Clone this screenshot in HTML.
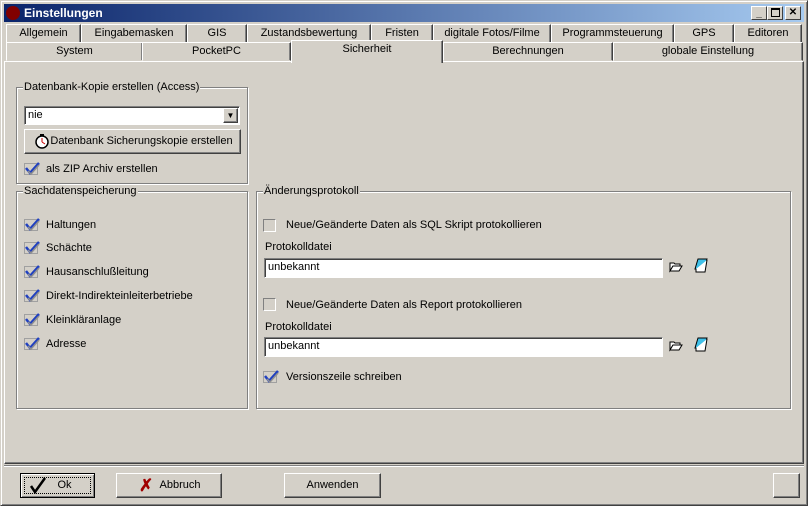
<!DOCTYPE html>
<html><head><meta charset="utf-8"><style>
*{box-sizing:border-box;margin:0;padding:0}
body{width:808px;height:506px;background:#d4d0c8;font-family:"Liberation Sans",sans-serif;font-size:11px;color:#000;position:relative;overflow:hidden}
.a{position:absolute}
.win{left:0;top:0;width:808px;height:506px;border:1px solid;border-color:#d4d0c8 #404040 #404040 #d4d0c8;box-shadow:inset 1px 1px #fff,inset -1px -1px #808080}
.title{left:4px;top:4px;width:800px;height:18px;background:linear-gradient(90deg,#0a246a,#a6caf0);color:#fff;font-weight:bold;font-size:12px;line-height:18px;padding-left:20px}
.tb{top:6px;width:16px;height:14px;background:#d4d0c8;border:1px solid;border-color:#fff #404040 #404040 #fff;font-size:10px;font-weight:bold;text-align:center;line-height:11px}
.tab{height:19px;background:#d4d0c8;border:1px solid;border-color:#fff #404040 transparent #fff;box-shadow:inset -1px 0 #808080;text-align:center;line-height:17px;font-size:11px}
.panel{left:4px;top:61px;width:800px;height:403px;border:1px solid;border-color:#fff #404040 #404040 #fff;box-shadow:inset -1px -1px #808080}
.grp{border:1px solid #808080;box-shadow:1px 1px #fff,inset 1px 1px #fff}
.lg{background:#d4d0c8;padding:0 1px;line-height:12px}
.inp{background:#fff;border:1px solid;border-color:#808080 #fff #fff #808080;box-shadow:inset 1px 1px #404040;padding-left:3px;line-height:17px}
.btn{background:#d4d0c8;border:1px solid;border-color:#fff #404040 #404040 #fff;box-shadow:inset -1px -1px #808080;text-align:center}
.cb{width:13px;height:13px;background:#d4d0c8;border:1px solid;border-color:#808080 #fff #fff #808080}
.t{font-size:11px}
</style></head><body>
<div class="a win"></div>
<div class="a title">Einstellungen</div>
<div class="a" style="left:6px;top:6px;width:14px;height:14px;background:#800000;border-radius:50%"></div>
<div class="a tb" style="left:751px;line-height:13px">_</div>
<div class="a tb" style="left:767px"><div style="margin:1px auto;width:9px;height:9px;border:1px solid #000;border-top-width:2px"></div></div>
<div class="a tb" style="left:785px;line-height:12px">&#x2715;</div>

<div class="a tab" style="left:6px;top:24px;width:75px">Allgemein</div>
<div class="a tab" style="left:81px;top:24px;width:106px">Eingabemasken</div>
<div class="a tab" style="left:187px;top:24px;width:60px">GIS</div>
<div class="a tab" style="left:247px;top:24px;width:124px">Zustandsbewertung</div>
<div class="a tab" style="left:371px;top:24px;width:62px">Fristen</div>
<div class="a tab" style="left:433px;top:24px;width:118px">digitale Fotos/Filme</div>
<div class="a tab" style="left:551px;top:24px;width:123px">Programmsteuerung</div>
<div class="a tab" style="left:674px;top:24px;width:60px">GPS</div>
<div class="a tab" style="left:734px;top:24px;width:68px">Editoren</div>

<div class="a panel"></div>
<div class="a tab" style="left:6px;top:42px;width:137px">System</div>
<div class="a tab" style="left:142px;top:42px;width:149px">PocketPC</div>
<div class="a tab" style="left:291px;top:40px;width:152px;height:23px;border-bottom:none;line-height:17px">Sicherheit</div>
<div class="a tab" style="left:443px;top:42px;width:170px">Berechnungen</div>
<div class="a tab" style="left:613px;top:42px;width:190px">globale Einstellung</div>

<div class="a grp" style="left:16px;top:87px;width:232px;height:97px"></div>
<div class="a lg" style="left:23px;top:81px">Datenbank-Kopie erstellen (Access)</div>
<div class="a inp" style="left:24px;top:106px;width:216px;height:19px">nie</div>
<div class="a btn" style="left:223px;top:108px;width:15px;height:15px;font-size:8px;line-height:13px">&#9660;</div>
<div class="a btn" style="left:24px;top:129px;width:217px;height:25px;line-height:23px;padding-left:18px">Datenbank Sicherungskopie erstellen</div>
<svg class="a" style="left:34px;top:133px" width="16" height="16"><circle cx="8" cy="9" r="6" fill="#fff" stroke="#000" stroke-width="1.5"/><path d="M8 9V5M8 9l3 2" stroke="#c00" stroke-width="1"/><rect x="6" y="1" width="4" height="2" fill="#000"/></svg>

<div class="a grp" style="left:16px;top:191px;width:232px;height:218px"></div>
<div class="a lg" style="left:23px;top:185px">Sachdatenspeicherung</div>
<div class="a grp" style="left:256px;top:191px;width:535px;height:218px"></div>
<div class="a lg" style="left:263px;top:185px">Änderungsprotokoll</div>

<svg width="0" height="0" style="position:absolute"><defs><g id="ck"><rect x="0.5" y="3.5" width="13" height="11" fill="#d4d0c8" stroke="#a0a0a0"/><path d="M2 8l4 5 9-10" fill="none" stroke="#2040c0" stroke-width="2.5"/><path d="M4 11l3 3 8-9" fill="none" stroke="#909090" stroke-width="1.5"/></g></defs></svg>

<svg class="a" style="left:24px;top:160px" width="18" height="17"><use href="#ck"/></svg><div class="a t" style="left:46px;top:163px">als ZIP Archiv erstellen</div>
<svg class="a" style="left:24px;top:216px" width="18" height="17"><use href="#ck"/></svg><div class="a t" style="left:46px;top:219px">Haltungen</div>
<svg class="a" style="left:24px;top:239px" width="18" height="17"><use href="#ck"/></svg><div class="a t" style="left:46px;top:242px">Schächte</div>
<svg class="a" style="left:24px;top:263px" width="18" height="17"><use href="#ck"/></svg><div class="a t" style="left:46px;top:266px">Hausanschlußleitung</div>
<svg class="a" style="left:24px;top:287px" width="18" height="17"><use href="#ck"/></svg><div class="a t" style="left:46px;top:290px">Direkt-Indirekteinleiterbetriebe</div>
<svg class="a" style="left:24px;top:311px" width="18" height="17"><use href="#ck"/></svg><div class="a t" style="left:46px;top:314px">Kleinkläranlage</div>
<svg class="a" style="left:24px;top:335px" width="18" height="17"><use href="#ck"/></svg><div class="a t" style="left:46px;top:338px">Adresse</div>

<div class="a cb" style="left:263px;top:219px"></div><div class="a t" style="left:286px;top:219px">Neue/Geänderte Daten als SQL Skript protokollieren</div>
<div class="a t" style="left:265px;top:241px">Protokolldatei</div>
<div class="a inp" style="left:264px;top:258px;width:399px;height:20px">unbekannt</div>
<div class="a cb" style="left:263px;top:298px"></div><div class="a t" style="left:286px;top:299px">Neue/Geänderte Daten als Report protokollieren</div>
<div class="a t" style="left:265px;top:321px">Protokolldatei</div>
<div class="a inp" style="left:264px;top:337px;width:399px;height:20px">unbekannt</div>
<svg class="a" style="left:263px;top:368px" width="18" height="17"><use href="#ck"/></svg><div class="a t" style="left:286px;top:371px">Versionszeile schreiben</div>

<svg class="a" style="left:669px;top:261px" width="14" height="12"><path d="M1 2h4l1 1h5v2H4L1 10z" fill="#fff" stroke="#000"/><path d="M1 10l3-5h9l-3 5z" fill="#fff" stroke="#000"/></svg>
<svg class="a" style="left:693px;top:258px" width="16" height="16"><path d="M5 1h9l-3 10H2z" fill="#40c0e8" stroke="#000"/><path d="M3 11v3h9l2-12" fill="#fff" stroke="#000"/></svg>
<svg class="a" style="left:669px;top:340px" width="14" height="12"><path d="M1 2h4l1 1h5v2H4L1 10z" fill="#fff" stroke="#000"/><path d="M1 10l3-5h9l-3 5z" fill="#fff" stroke="#000"/></svg>
<svg class="a" style="left:693px;top:337px" width="16" height="16"><path d="M5 1h9l-3 10H2z" fill="#40c0e8" stroke="#000"/><path d="M3 11v3h9l2-12" fill="#fff" stroke="#000"/></svg>

<div class="a" style="left:4px;top:465px;width:800px;height:2px;border-top:1px solid #808080;border-bottom:1px solid #fff"></div>
<div class="a btn" style="left:20px;top:473px;width:75px;height:25px;border:1px solid #000;box-shadow:inset 1px 1px #fff,inset -1px -1px #808080"><div style="margin:3px;height:17px;border:1px dotted #000;line-height:15px;padding-left:14px">Ok</div></div>
<svg class="a" style="left:29px;top:476px" width="18" height="18"><path d="M2 10l4 6L16 2" fill="none" stroke="#000" stroke-width="2.5"/></svg>
<div class="a btn" style="left:116px;top:473px;width:106px;height:25px;line-height:23px;padding-left:22px">Abbruch</div>
<div class="a" style="left:139px;top:477px;color:#a00000;font-weight:bold;font-size:17px;line-height:17px">✗</div>
<div class="a btn" style="left:284px;top:473px;width:97px;height:25px;line-height:23px">Anwenden</div>
<div class="a btn" style="left:773px;top:473px;width:27px;height:25px"></div>
</body></html>
